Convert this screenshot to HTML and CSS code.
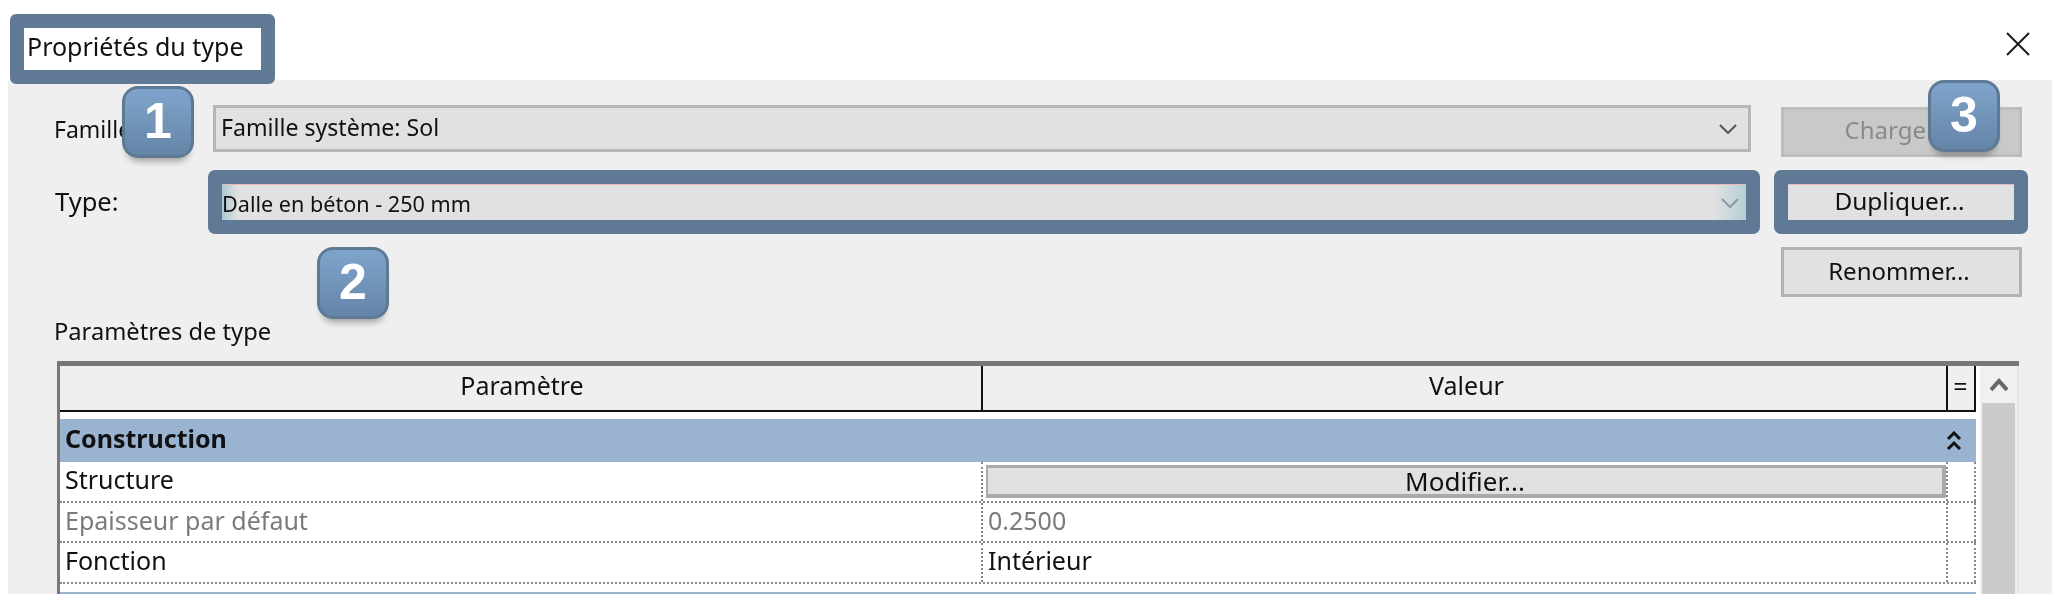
FILE: index.html
```html
<!DOCTYPE html>
<html lang="fr">
<head>
    <meta charset="UTF-8">
    <title>Propriétés du type</title>
    <link rel="stylesheet" href="styles.css">
</head>
<body>
    <div class="title-bar">
        <div class="title-box">Propriétés du type</div>
        <svg class="close" width="24" height="24" viewBox="0 0 24 24"><path d="M1 1 L23 23 M23 1 L1 23" stroke="#1a1a1a" stroke-width="2" fill="none"/></svg>
    </div>

    <div class="panel">
        <div class="row row-famille">
            <div class="label">Famille:</div>
            <div class="combo">
                <span>Famille système: Sol</span>
                <svg class="chevron" width="18" height="10" viewBox="0 0 18 10"><path d="M1 1 L9 9 L17 1" stroke="#555" stroke-width="2" fill="none"/></svg>
            </div>
            <div class="btn btn-disabled">Charger...</div>
        </div>

        <div class="row row-type">
            <div class="label label-type">Type:</div>
            <div class="frame frame-type">
                <div class="frame-inner type-field">
                    <span>Dalle en béton - 250 mm</span>
                    <svg class="chevron" width="18" height="10" viewBox="0 0 18 10"><path d="M1 1 L9 9 L17 1" stroke="#8a9ba0" stroke-width="2" fill="none"/></svg>
                </div>
            </div>
            <div class="frame frame-dup">
                <div class="frame-inner dup-field">Dupliquer...</div>
            </div>
        </div>

        <div class="row row-rename">
            <div class="btn btn-rename">Renommer...</div>
        </div>

        <div class="label params-label">Paramètres de type</div>

        <div class="table-wrap">
            <div class="table">
                <div class="thead">
                    <div class="th th-param">Paramètre</div>
                    <div class="th th-value">Valeur</div>
                    <div class="th th-eq">=</div>
                </div>
                <div class="section">
                    <b>Construction</b>
                    <svg width="16" height="20" viewBox="0 0 16 20"><path d="M2 8 L8 2 L14 8 M2 18 L8 12 L14 18" stroke="#111" stroke-width="3" fill="none"/></svg>
                </div>
                <div class="tr">
                    <div class="td">Structure</div>
                    <div class="td td-btn"><div class="modify">Modifier...</div></div>
                    <div class="td"></div>
                </div>
                <div class="tr tr-off">
                    <div class="td">Epaisseur par défaut</div>
                    <div class="td">0.2500</div>
                    <div class="td"></div>
                </div>
                <div class="tr">
                    <div class="td">Fonction</div>
                    <div class="td">Intérieur</div>
                    <div class="td"></div>
                </div>
                <div class="section section-next"></div>
            </div>
            <div class="scrollbar">
                <div class="scroll-up">
                    <svg width="18" height="14" viewBox="0 0 18 14"><path d="M1 12 L9 3 L17 12" stroke="#666" stroke-width="4" fill="none"/></svg>
                </div>
                <div class="scroll-thumb"></div>
            </div>
        </div>
    </div>

    <div class="badge badge-1">1</div>
    <div class="badge badge-2">2</div>
    <div class="badge badge-3">3</div>
</body>
</html>
```

FILE: styles.css
```css
* {
    box-sizing: border-box;
    margin: 0;
    padding: 0;
}

body {
    position: relative;
    width: 2066px;
    height: 614px;
    overflow: hidden;
    background: white;
    font-family: 'Noto Sans', sans-serif;
    font-size: 23px;
    color: #111;
    filter: blur(0.5px);
}

.title-bar {
    position: relative;
    z-index: 2;
    display: flex;
    justify-content: space-between;
    align-items: flex-start;
    height: 80px;
    padding: 14px 36px 0 10px;
}

.title-box {
    width: 265px;
    height: 70px;
    border: 14px solid #607a96;
    border-radius: 6px;
    background-clip: padding-box;
    background-color: white;
    font-size: 25px;
    line-height: 36px;
    padding-left: 3px;
    white-space: nowrap;
}

.close {
    margin-top: 18px;
}

.panel {
    width: 2044px;
    height: 514px;
    margin-left: 8px;
    padding-left: 47px;
    background: #efefef;
    overflow: hidden;
}

.row {
    display: flex;
    align-items: flex-start;
}

.row-famille {
    margin-top: 25px;
}

.row-type {
    margin-top: 13px;
}

.row-rename {
    margin-top: 13px;
    padding-left: 1726px;
}

.label {
    width: 158px;
    line-height: 49px;
    white-space: nowrap;
    text-indent: -1px;
}

.label-type {
    width: 153px;
    line-height: 62px;
    font-size: 25.5px;
    text-indent: 0;
}

.combo {
    display: flex;
    justify-content: space-between;
    align-items: center;
    width: 1538px;
    height: 47px;
    padding: 0 11px 0 5px;
    background: #e1e1e1;
    border: 3px solid #b7b7b7;
}

.combo span {
    margin-bottom: 3px;
    font-size: 23.1px;
}

.btn {
    width: 241px;
    height: 50px;
    line-height: 40px;
    text-align: center;
    background: #e1e1e1;
    border: 3px solid #b3b3b3;
    font-size: 24px;
}

.btn-disabled {
    margin: 2px 0 0 30px;
    padding-right: 7px;
    background: #c9c9c9;
    border-color: #bdbdbd;
    color: #8a8a8a;
}

.btn-rename {
    line-height: 42px;
    padding-right: 5px;
}

.frame {
    height: 64px;
    padding: 14px;
    border-radius: 7px;
    background: #607a96;
}

.frame-type {
    width: 1552px;
}

.frame-dup {
    width: 254px;
    margin-left: 14px;
}

.frame-inner {
    height: 36px;
    line-height: 32px;
    border-top: 1px solid #e9b9b9;
    background: #e1e1e1;
}

.type-field {
    display: flex;
    justify-content: space-between;
    align-items: center;
    padding-right: 7px;
    font-size: 21.6px;
    background: linear-gradient(to right, #a9c8d2, #e1e1e1 16px, #e1e1e1 calc(100% - 32px), #b2cfd6);
}

.type-field span {
    margin-top: 2px;
}

.dup-field {
    padding-right: 3px;
    text-align: center;
    font-size: 24.4px;
}

.params-label {
    width: auto;
    margin-top: 19px;
    line-height: 30px;
    font-size: 23.7px;
}

.table-wrap {
    display: flex;
    width: 1962px;
    height: 233px;
    margin: 15px 0 0 2px;
    border-top: 5px solid #777;
    border-left: 3px solid #777;
    background: white;
    font-size: 25px;
}

.table {
    width: 916px;
    flex: 1;
    display: flex;
    flex-direction: column;
}

.thead,
.tr {
    display: grid;
    grid-template-columns: 923px 965px 28px;
}

.thead {
    height: 46px;
    flex: none;
    background: #efefef;
    border-bottom: 2px solid #111;
}

.th {
    text-align: center;
    line-height: 38px;
    border-right: 2px solid #111;
}

.th-param {
    padding-left: 3px;
}

.th-value {
    padding-left: 4px;
}

.th-eq {
    line-height: 40px;
    font-size: 25px;
    padding-right: 1px;
}

.section {
    display: flex;
    justify-content: space-between;
    align-items: center;
    flex: none;
    height: 43px;
    margin-top: 7px;
    padding: 0 14px 0 5px;
    background: #9ab3d0;
}

.section b {
    margin-bottom: 6px;
}

.section-next {
    height: 2px;
    margin-top: 8px;
}

.tr {
    height: 41px;
    flex: none;
    border-bottom: 2px dotted #888;
    line-height: 34px;
}

.td {
    padding-left: 5px;
    white-space: nowrap;
    border-right: 2px dotted #888;
}

.tr-off {
    height: 40px;
    color: #7b7b7b;
}

.td-btn {
    padding: 3px 0 0 3px;
}

.modify {
    height: 33px;
    line-height: 26px;
    text-align: center;
    color: #111;
    background: #e1e1e1;
    border: 3px solid #aaa;
    border-width: 3px 4px 4px 2px;
    font-size: 26px;
}

.scrollbar {
    width: 39px;
    flex: none;
    margin-left: 4px;
    padding: 0 2px;
    background: #f0f0f0;
    border-right: 2px solid #e6e6e6;
}

.scroll-up {
    display: flex;
    justify-content: center;
    align-items: center;
    height: 37px;
}

.scroll-thumb {
    height: 200px;
    background: #cbcbcb;
}

.badge {
    position: absolute;
    z-index: 3;
    width: 72px;
    height: 72px;
    border: 3px solid #5f7995;
    border-radius: 16px;
    background: linear-gradient(to bottom, #7fa4cb, #6585a8);
    box-shadow: 0 8px 7px -5px rgba(0, 0, 0, 0.35);
    color: white;
    font-family: 'Liberation Sans', sans-serif;
    font-size: 50px;
    font-weight: bold;
    line-height: 64px;
    text-align: center;
}

.badge-1 {
    left: 122px;
    top: 86px;
}

.badge-2 {
    left: 317px;
    top: 247px;
}

.badge-3 {
    left: 1928px;
    top: 80px;
}
```
